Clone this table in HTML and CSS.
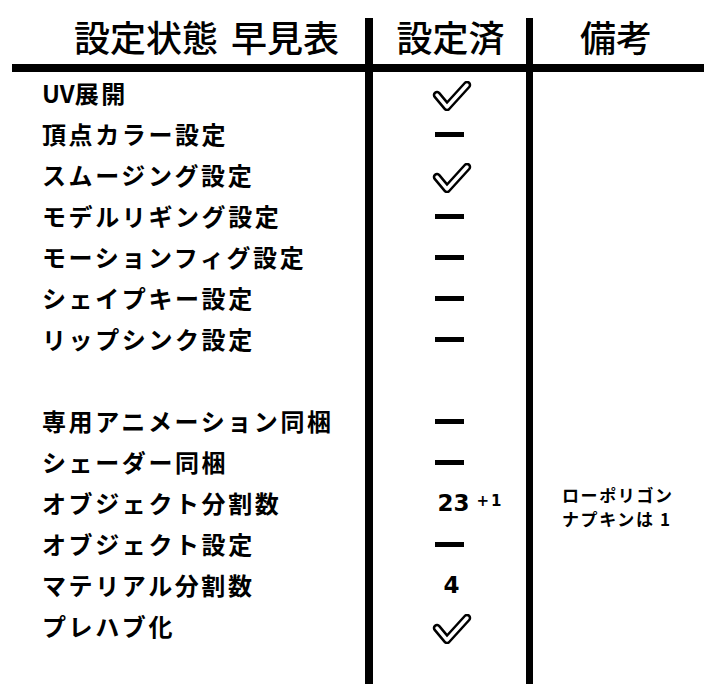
FILE: index.html
```html
<!DOCTYPE html>
<html lang="ja">
<head>
<meta charset="utf-8">
<title>設定状態 早見表</title>
<link rel="stylesheet" href="styles.css">
</head>
<body>
<div class="sheet">
  <div class="col col-items">
    <div class="head head-items">設定状態 早見表</div>
    <div class="body">
      <div class="row"><span class="latin">UV</span>展開</div>
      <div class="row">頂点カラー設定</div>
      <div class="row">スムージング設定</div>
      <div class="row">モデルリギング設定</div>
      <div class="row">モーションフィグ設定</div>
      <div class="row">シェイプキー設定</div>
      <div class="row">リップシンク設定</div>
      <div class="row"></div>
      <div class="row">専用アニメーション同梱</div>
      <div class="row">シェーダー同梱</div>
      <div class="row">オブジェクト分割数</div>
      <div class="row">オブジェクト設定</div>
      <div class="row">マテリアル分割数</div>
      <div class="row">プレハブ化</div>
    </div>
  </div>
  <div class="col col-status">
    <div class="head head-status">設定済</div>
    <div class="body">
      <div class="row cell"><svg class="check" viewBox="0 0 40 30" width="40" height="30"><path class="check-out" d="M5 14 L15 26 L35 4"/><path class="check-in" d="M5 14 L15 26 L35 4"/></svg></div>
      <div class="row cell"><span class="dash"></span></div>
      <div class="row cell"><svg class="check" viewBox="0 0 40 30" width="40" height="30"><path class="check-out" d="M5 14 L15 26 L35 4"/><path class="check-in" d="M5 14 L15 26 L35 4"/></svg></div>
      <div class="row cell"><span class="dash"></span></div>
      <div class="row cell"><span class="dash"></span></div>
      <div class="row cell"><span class="dash"></span></div>
      <div class="row cell"><span class="dash"></span></div>
      <div class="row cell"></div>
      <div class="row cell"><span class="dash"></span></div>
      <div class="row cell"><span class="dash"></span></div>
      <div class="row cell"><span class="num">23</span><span class="plus">+1</span></div>
      <div class="row cell"><span class="dash"></span></div>
      <div class="row cell"><span class="num">4</span></div>
      <div class="row cell"><svg class="check" viewBox="0 0 40 30" width="40" height="30"><path class="check-out" d="M5 14 L15 26 L35 4"/><path class="check-in" d="M5 14 L15 26 L35 4"/></svg></div>
    </div>
  </div>
  <div class="col col-notes">
    <div class="head head-notes">備考</div>
    <div class="body">
      <div class="row"></div>
      <div class="row"></div>
      <div class="row"></div>
      <div class="row"></div>
      <div class="row"></div>
      <div class="row"></div>
      <div class="row"></div>
      <div class="row"></div>
      <div class="row"></div>
      <div class="row"></div>
      <div class="row note-row"><div class="note">ローポリゴン<br>ナプキンは 1</div></div>
      <div class="row"></div>
      <div class="row"></div>
      <div class="row"></div>
    </div>
  </div>
</div>
</body>
</html>
```

FILE: styles.css
```css
html, body {
  margin: 0;
  padding: 0;
  background: #fff;
}

body {
  font-family: "Noto Sans CJK JP", "Noto Sans", sans-serif;
  color: #000;
  overflow: hidden;
}

.sheet {
  display: flex;
  width: 704px;
  height: 684px;
  padding-top: 18px;
  box-sizing: border-box;
}

.col {
  display: flex;
  flex-direction: column;
}

.col-items {
  margin-left: 12px;
  width: 353px;
}

.col-status {
  width: 153px;
  border-left: 8px solid #000;
  border-right: 7px solid #000;
}

.col-notes {
  flex: 1;
}

.head {
  box-sizing: border-box;
  border-bottom: 8px solid #000;
  height: 54px;
  font-size: 36px;
  line-height: 36px;
  font-weight: 500;
  padding-bottom: 10px;
  white-space: nowrap;
}

.head-items {
  padding-left: 62px;
  word-spacing: 5px;
}

.head-status {
  text-align: center;
  padding-left: 2px;
}

.head-notes {
  padding-left: 47px;
}

.body {
  padding-top: 0;
}

.row {
  height: 41px;
  display: flex;
  align-items: center;
  white-space: nowrap;
}

.col-items .row {
  padding-left: 30px;
  font-size: 24px;
  font-weight: 700;
  letter-spacing: 2.6px;
}

.latin {
  letter-spacing: 0;
}

.cell {
  justify-content: center;
}

.check {
  display: block;
  margin-left: 4px;
  margin-top: 6px;
}

.check-out {
  fill: none;
  stroke: #000;
  stroke-width: 8.5;
  stroke-linecap: round;
  stroke-linejoin: round;
}

.check-in {
  fill: none;
  stroke: #fff;
  stroke-width: 3.5;
  stroke-linecap: round;
  stroke-linejoin: round;
}

.dash {
  display: block;
  width: 29px;
  height: 5px;
  background: #000;
  margin-top: 2px;
}

.num {
  font-family: "DejaVu Sans", sans-serif;
  font-weight: 700;
  font-size: 23px;
  margin-left: 4px;
}

.plus {
  font-family: "DejaVu Sans", sans-serif;
  font-weight: 700;
  font-size: 15px;
  letter-spacing: 2px;
  margin-left: 7px;
  margin-right: -38px;
  position: relative;
  top: -2px;
}

.note-row {
  padding-left: 29px;
  padding-top: 4px;
}

.note {
  font-size: 17px;
  font-weight: 700;
  line-height: 24px;
  letter-spacing: 1.6px;
}
```
